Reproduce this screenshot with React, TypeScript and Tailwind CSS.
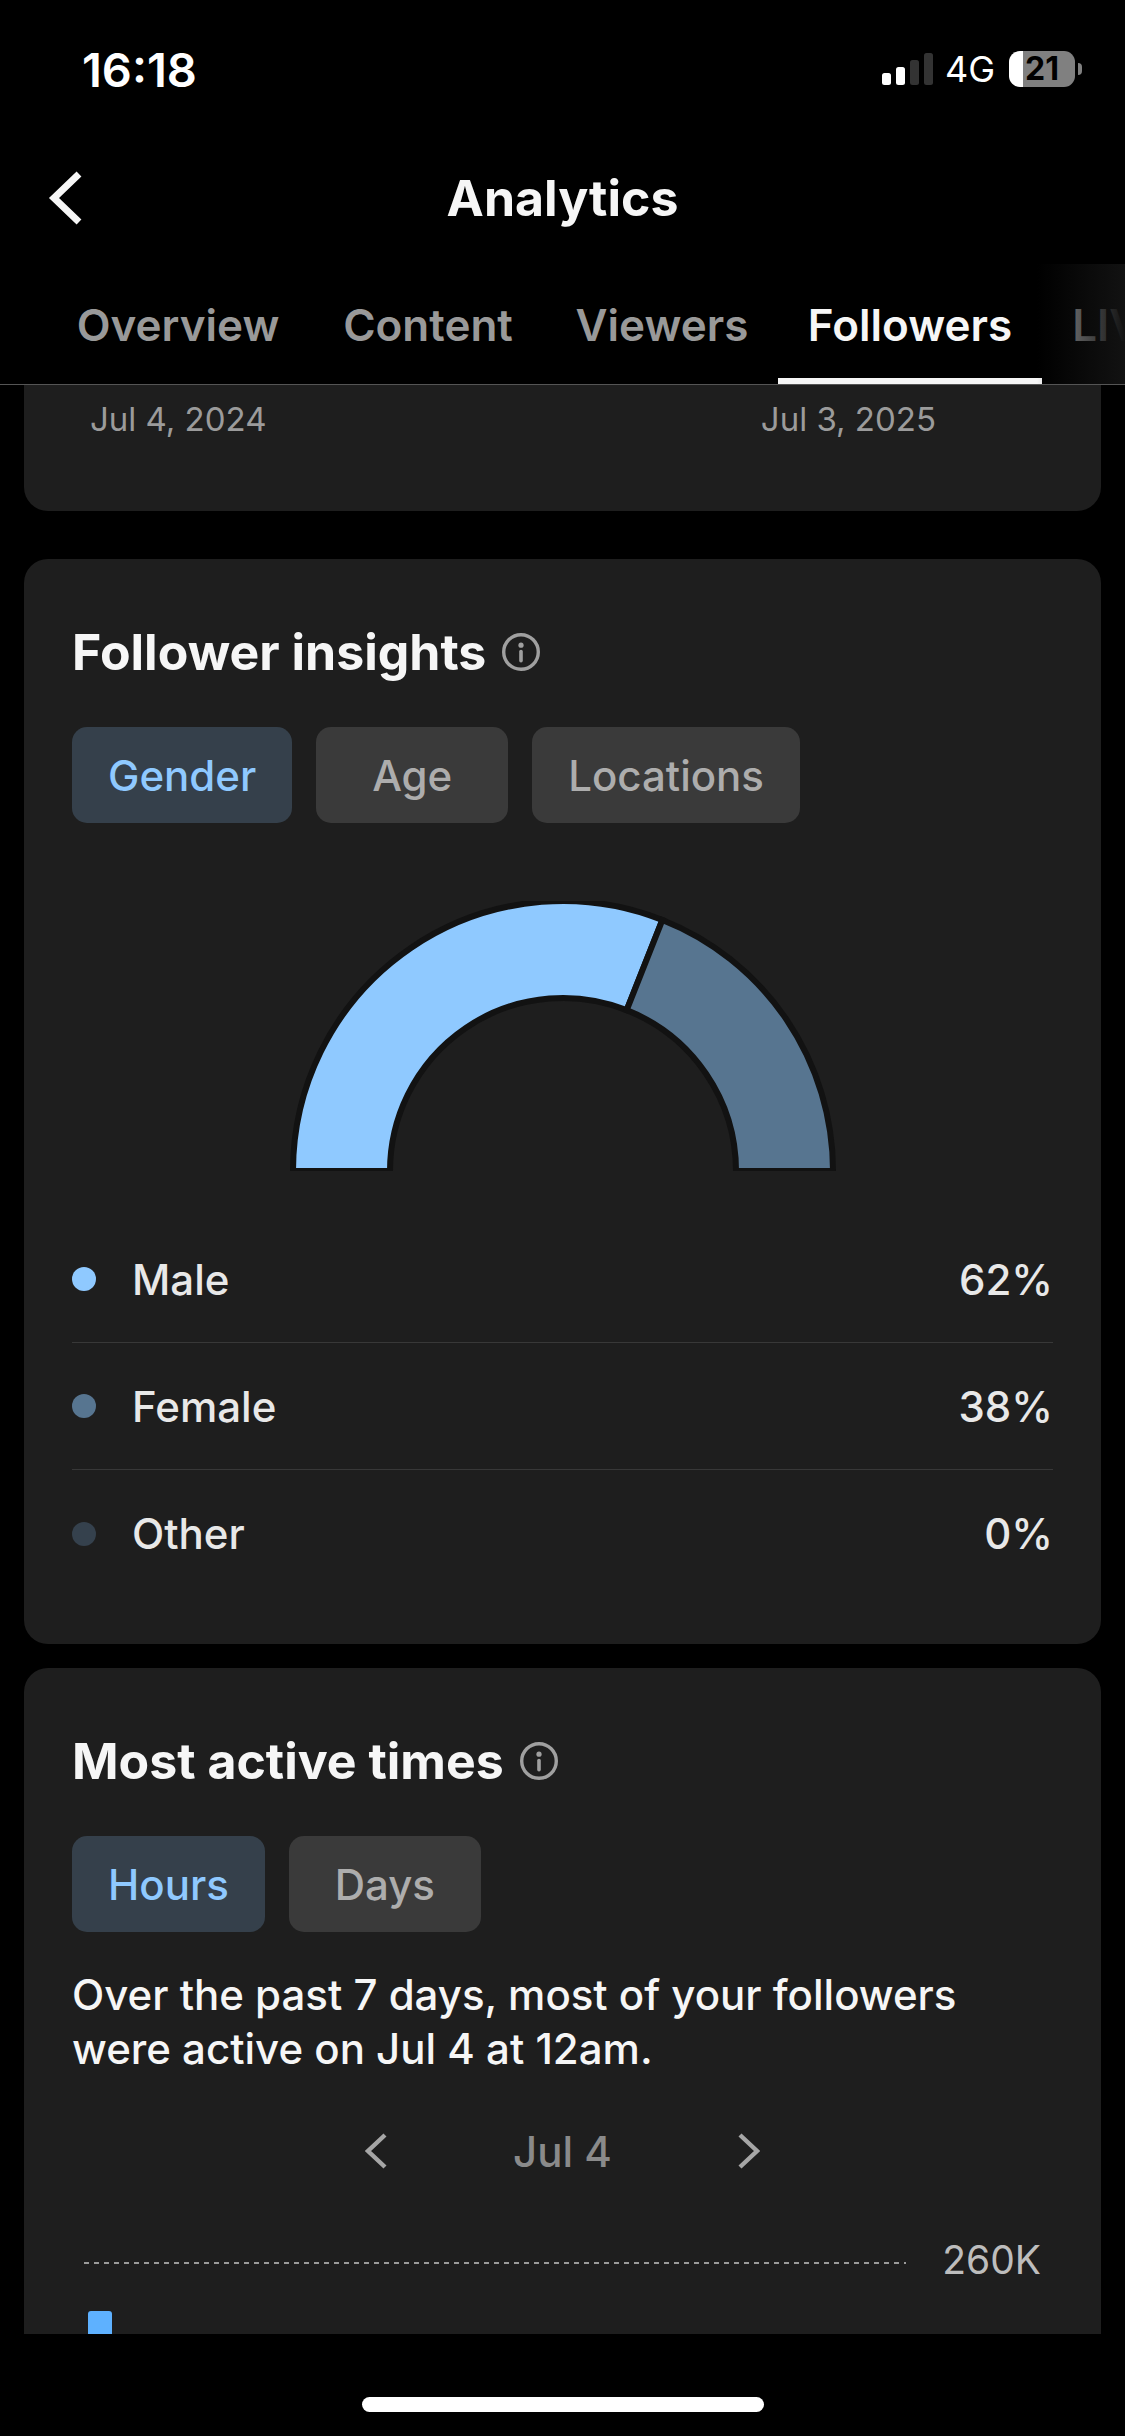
import { useState } from "react";

const TABS = [
  { label: "Overview", width: "w-66" },
  { label: "Content", width: "w-59" },
  { label: "Viewers", width: "w-58" },
  { label: "Followers", width: "w-66" },
  { label: "LIVE", width: "w-39" },
];

const GENDERS = [
  { label: "Male", percent: 62, dot: "bg-[#8fc9ff]", fill: "#8fc9ff" },
  { label: "Female", percent: 38, dot: "bg-[#577590]", fill: "#577590" },
  { label: "Other", percent: 0, dot: "bg-[#35414d]", fill: "#35414d" },
];

function StatusBar() {
  return (
    <div className="flex h-33 items-center justify-between pt-1.5 pr-[43px] pl-[82px] text-white">
      <time className="text-[47px] leading-none font-semibold">16:18</time>
      <div className="flex items-center">
        <svg width="51" height="32" viewBox="0 0 51 32" aria-hidden="true">
          <rect x="0" y="20" width="9" height="12" rx="2.5" fill="#fff" />
          <rect x="14" y="14" width="9" height="18" rx="2.5" fill="#fff" />
          <rect x="28" y="7" width="9" height="25" rx="2.5" fill="#333" />
          <rect x="42" y="0" width="9" height="32" rx="2.5" fill="#333" />
        </svg>
        <span className="ml-3 text-[36px] leading-none">4G</span>
        <div className="ml-3.5 flex h-9 w-[66px] items-center justify-center rounded-[11px] bg-[linear-gradient(to_right,#fff_14px,#808080_14px)]">
          <span className="text-[32px] leading-9 font-bold text-black">21</span>
        </div>
        <div className="ml-[3px] h-3 w-1 rounded-r-full bg-[#808080]" />
      </div>
    </div>
  );
}

function InfoIcon() {
  return (
    <svg width="38" height="38" viewBox="0 0 38 38" fill="none" aria-hidden="true">
      <circle cx="19" cy="19" r="17.3" stroke="#a0a0a0" strokeWidth="3.4" />
      <circle cx="19" cy="12.2" r="2.6" fill="#a0a0a0" />
      <path d="M19 18.6v9.2" stroke="#a0a0a0" strokeWidth="3.6" strokeLinecap="round" />
    </svg>
  );
}

function CardTitle({ children }: { children: string }) {
  return (
    <div className="mb-[30px] flex h-[90px] items-center gap-4">
      <h2 className="text-[50px] leading-none font-bold">{children}</h2>
      <button aria-label={`About ${children}`}>
        <InfoIcon />
      </button>
    </div>
  );
}

function Chips({ options }: { options: string[] }) {
  const [active, setActive] = useState(options[0]);

  return (
    <div className="flex gap-6">
      {options.map((option) => (
        <button
          key={option}
          onClick={() => setActive(option)}
          aria-pressed={option === active}
          className={`h-24 min-w-48 rounded-[15px] px-9 text-[42px] font-medium ${
            option === active
              ? "bg-[#35404b] text-[#8fc9ff]"
              : "bg-[#3a3a3a] text-[#adadad]"
          }`}
        >
          {option}
        </button>
      ))}
    </div>
  );
}

const OUTER = 270;
const INNER = 173;

// Point on the half circle, share 0 = left end, 1 = right end.
function point(radius: number, share: number) {
  const angle = Math.PI * (1 - share);
  return `${273 + radius * Math.cos(angle)} ${270 - radius * Math.sin(angle)}`;
}

function GenderChart() {
  let start = 0;
  const slices = GENDERS.filter((g) => g.percent > 0).map((g) => {
    const end = start + g.percent / 100;
    const d = `M${point(OUTER, start)} A${OUTER} ${OUTER} 0 0 1 ${point(OUTER, end)} L${point(INNER, end)} A${INNER} ${INNER} 0 0 0 ${point(INNER, start)} Z`;
    start = end;
    return <path key={g.label} d={d} fill={g.fill} />;
  });

  return (
    <svg
      className="mx-auto mt-[78px] block"
      width="546"
      height="270"
      viewBox="0 0 546 270"
      stroke="#121212"
      strokeWidth="6"
      role="img"
      aria-label="Followers by gender"
    >
      {slices}
    </svg>
  );
}

function Chevron({ flip = false }: { flip?: boolean }) {
  return (
    <svg width="22" height="36" viewBox="0 0 22 36" fill="none" aria-hidden="true">
      <path
        d={flip ? "M2 2l17 16L2 34" : "M20 2L3 18l17 16"}
        stroke="#a6a6a6"
        strokeWidth="4.4"
      />
    </svg>
  );
}

export default function App() {
  const [tab, setTab] = useState("Followers");

  return (
    <div className="flex h-screen flex-col bg-black font-['Inter',sans-serif] text-[#f6f6f6]">
      <StatusBar />

      <header className="grid h-33 shrink-0 grid-cols-[1fr_auto_1fr] items-center px-12">
        <button aria-label="Back" className="justify-self-start">
          <svg width="34" height="54" viewBox="0 0 34 54" fill="none" aria-hidden="true">
            <path d="M31 3L6 27l25 24" stroke="#f6f6f6" strokeWidth="7" />
          </svg>
        </button>
        <h1 className="text-[50px] leading-none font-bold">Analytics</h1>
      </header>

      <nav className="relative flex h-[121px] shrink-0 overflow-hidden border-b border-[#555] pl-[46px]">
        {TABS.map(({ label, width }) => (
          <button
            key={label}
            onClick={() => setTab(label)}
            className={`shrink-0 border-b-6 pt-2 text-[44px] font-semibold ${width} ${
              label === tab
                ? "border-[#f6f6f6] text-[#f6f6f6]"
                : "border-transparent text-[#999]"
            }`}
          >
            {label}
          </button>
        ))}
        <div className="pointer-events-none absolute inset-y-0 right-0 w-22 bg-linear-to-r from-transparent to-[#121212]" />
      </nav>

      <main className="min-h-0 flex-1 overflow-hidden px-6">
        <section className="flex h-[126px] justify-between rounded-b-3xl bg-[#1e1e1e] pt-2.5 pr-[165px] pl-[66px] text-[33px] leading-[48px] text-[#9b9b9b]">
          <span>Jul 4, 2024</span>
          <span>Jul 3, 2025</span>
        </section>

        <section className="mt-12 rounded-3xl bg-[#1e1e1e] p-12 pb-[47px]">
          <CardTitle>Follower insights</CardTitle>
          <Chips options={["Gender", "Age", "Locations"]} />
          <GenderChart />
          <ul className="mt-[45px] divide-y divide-[#383838] text-[42px] font-medium text-[#e8e8e8]">
            {GENDERS.map(({ label, percent, dot }) => (
              <li key={label} className="flex h-[127px] items-center">
                <span className={`mr-9 size-6 rounded-full ${dot}`} />
                <span>{label}</span>
                <span className="ml-auto">{percent}%</span>
              </li>
            ))}
          </ul>
        </section>

        <section className="mt-6 rounded-t-3xl bg-[#1e1e1e] p-12">
          <CardTitle>Most active times</CardTitle>
          <Chips options={["Hours", "Days"]} />
          <p className="mt-9 max-w-[930px] text-[42px] leading-[54px] font-medium">
            Over the past 7 days, most of your followers were active on Jul 4 at 12am.
          </p>

          <div className="mx-auto mt-12 flex h-[54px] w-99 items-center justify-between">
            <button aria-label="Previous day">
              <Chevron />
            </button>
            <span className="text-[42px] font-medium text-[#8a8a8a]">Jul 4</span>
            <button aria-label="Next day">
              <Chevron flip />
            </button>
          </div>

          <div className="mt-[58px] flex items-center pr-3 pl-3">
            <svg className="h-2 min-w-0 flex-1" aria-hidden="true">
              <line x1="0" y1="7" x2="100%" y2="7" stroke="#9a9a9a" strokeWidth="2" strokeDasharray="5 5" />
            </svg>
            <span className="ml-9 text-[39px] leading-[48px] text-[#bdbdbd]">260K</span>
          </div>
          <div className="mt-[27px] ml-4 h-60 w-6 rounded-t-[3px] bg-[#5eb1ff]" />
        </section>
      </main>

      <footer className="flex h-[102px] shrink-0 justify-center pt-[63px]">
        <div className="h-[15px] w-[402px] rounded-full bg-white" />
      </footer>
    </div>
  );
}
